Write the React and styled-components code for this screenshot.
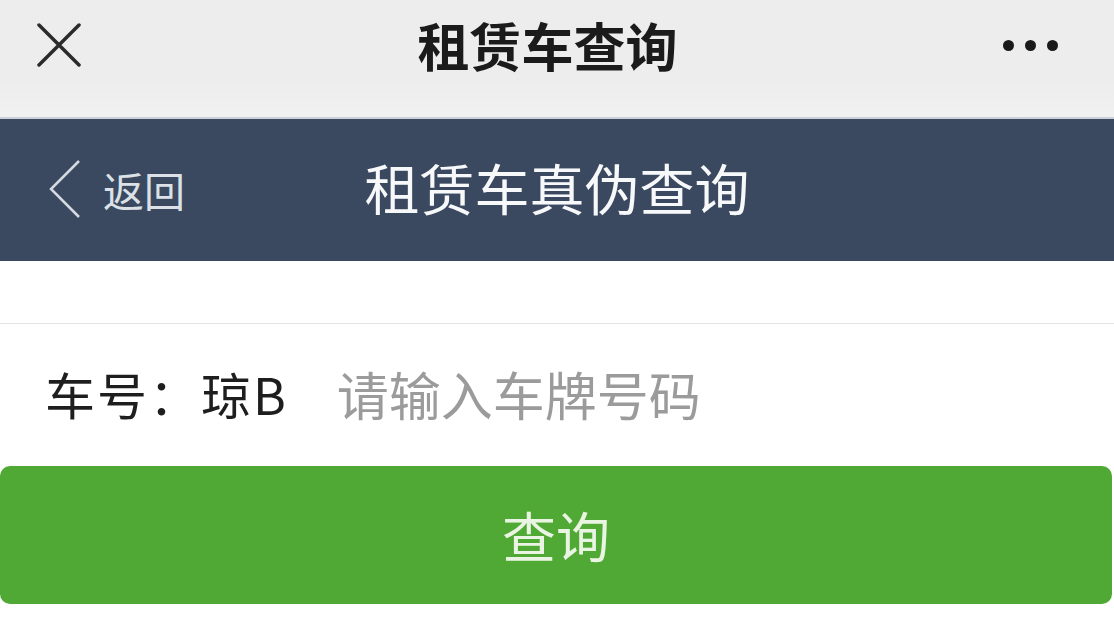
import React from "react";
import styled, { createGlobalStyle } from "styled-components";

const GlobalStyle = createGlobalStyle`
  html, body {
    margin: 0;
    padding: 0;
    background: #ffffff;
    font-family: "Noto Sans CJK SC", "Noto Sans", sans-serif;
  }
`;

const Page = styled.div`
  width: 1114px;
  min-height: 622px;
  background: #fff;
  overflow: hidden;
`;

const TopBar = styled.header`
  height: 119px;
  box-sizing: border-box;
  padding: 0 56px 28px 37px;
  display: grid;
  grid-template-columns: 1fr auto 1fr;
  align-items: center;
  background: linear-gradient(#ededed 70%, #f1f1f1);
  border-bottom: 2px solid #c9d0d8;
`;

const TopTitle = styled.h1`
  margin: 0;
  font-size: 52px;
  font-weight: 700;
  line-height: 1;
  color: #1b1b1b;
`;

const IconButton = styled.div`
  display: flex;
  align-items: center;
  justify-content: ${(p) => (p.right ? "flex-end" : "flex-start")};
`;

const Dots = styled.div`
  display: flex;
  gap: 11px;
  padding-top: 2px;
`;

const Dot = styled.span`
  width: 11px;
  height: 11px;
  border-radius: 50%;
  background: #1a1a1a;
`;

const NavBar = styled.nav`
  height: 142px;
  box-sizing: border-box;
  padding-bottom: 8px;
  display: grid;
  grid-template-columns: 1fr auto 1fr;
  align-items: center;
  background: #3a4960;
`;

const Back = styled.div`
  display: flex;
  align-items: center;
  gap: 22px;
  padding: 6px 0 0 49px;
  color: #dce1e7;
`;

const BackText = styled.span`
  font-size: 41px;
  line-height: 1;
`;

const NavTitle = styled.h2`
  margin: 0;
  font-size: 55px;
  font-weight: 400;
  line-height: 1;
  color: #f7f8fa;
`;

const Gap = styled.div`
  height: 62px;
  border-bottom: 1px solid #e4e4e4;
`;

const FieldRow = styled.label`
  height: 142px;
  display: flex;
  align-items: center;
  padding: 0 0 4px 45px;
  gap: 49px;
  box-sizing: border-box;
`;

const FieldLabel = styled.span`
  font-size: 50px;
  line-height: 1;
  letter-spacing: 2px;
  color: #1e1e1e;
  white-space: nowrap;
`;

const FieldInput = styled.input`
  flex: 1;
  border: none;
  outline: none;
  background: transparent;
  font-family: "Noto Sans CJK SC", "Noto Sans", sans-serif;
  font-size: 52px;
  color: #222;
  padding: 0;

  &::placeholder {
    color: #9b9b9b;
  }
`;

const SubmitButton = styled.button`
  display: flex;
  align-items: center;
  justify-content: center;
  width: 1112px;
  height: 138px;
  margin: 0;
  border: none;
  border-radius: 10px;
  background: #50a835;
  color: #e9f5e2;
  font-family: "Noto Sans CJK SC", "Noto Sans", sans-serif;
  font-size: 54px;
  line-height: 1;
  cursor: pointer;
`;

export default function App() {
  return (
    <Page>
      <GlobalStyle />
      <TopBar>
        <IconButton>
          <svg width="44" height="44" viewBox="0 0 44 44">
            <path
              d="M2 2 L42 42 M42 2 L2 42"
              stroke="#2b2b2b"
              strokeWidth="3.5"
              strokeLinecap="round"
            />
          </svg>
        </IconButton>
        <TopTitle>租赁车查询</TopTitle>
        <IconButton right>
          <Dots>
            <Dot />
            <Dot />
            <Dot />
          </Dots>
        </IconButton>
      </TopBar>

      <NavBar>
        <Back>
          <svg width="32" height="58" viewBox="0 0 32 58">
            <path
              d="M30 1 L2 29 L30 57"
              fill="none"
              stroke="#d6dbe2"
              strokeWidth="2.5"
            />
          </svg>
          <BackText>返回</BackText>
        </Back>
        <NavTitle>租赁车真伪查询</NavTitle>
        <div />
      </NavBar>

      <Gap />

      <FieldRow>
        <FieldLabel>车号：琼B</FieldLabel>
        <FieldInput placeholder="请输入车牌号码" />
      </FieldRow>

      <SubmitButton>查询</SubmitButton>
    </Page>
  );
}
